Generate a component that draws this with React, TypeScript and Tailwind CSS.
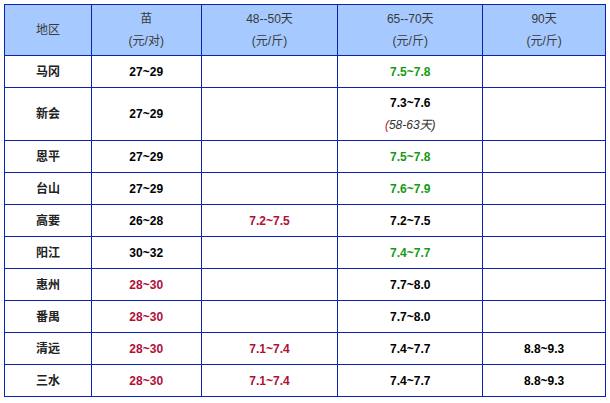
import React from "react";

type Cell = { t?: string; c?: "g" | "r" | "k" };
const G = "text-[#159a15]";
const R = "text-[#b0103a]";
const K = "text-black";

const rows: { name: string; h: string; cells: Cell[] }[] = [
  { name: "马冈", h: "h-[32px]", cells: [{ t: "27~29", c: "k" }, {}, { t: "7.5~7.8", c: "g" }, {}] },
  { name: "新会", h: "h-[53px]", cells: [{ t: "27~29", c: "k" }, {}, { t: "special" }, {}] },
  { name: "恩平", h: "h-[32px]", cells: [{ t: "27~29", c: "k" }, {}, { t: "7.5~7.8", c: "g" }, {}] },
  { name: "台山", h: "h-[32px]", cells: [{ t: "27~29", c: "k" }, {}, { t: "7.6~7.9", c: "g" }, {}] },
  { name: "高要", h: "h-[32px]", cells: [{ t: "26~28", c: "k" }, { t: "7.2~7.5", c: "r" }, { t: "7.2~7.5", c: "k" }, {}] },
  { name: "阳江", h: "h-[32px]", cells: [{ t: "30~32", c: "k" }, {}, { t: "7.4~7.7", c: "g" }, {}] },
  { name: "惠州", h: "h-[32px]", cells: [{ t: "28~30", c: "r" }, {}, { t: "7.7~8.0", c: "k" }, {}] },
  { name: "番禺", h: "h-[32px]", cells: [{ t: "28~30", c: "r" }, {}, { t: "7.7~8.0", c: "k" }, {}] },
  { name: "清远", h: "h-[32px]", cells: [{ t: "28~30", c: "r" }, { t: "7.1~7.4", c: "r" }, { t: "7.4~7.7", c: "k" }, { t: "8.8~9.3", c: "k" }] },
  { name: "三水", h: "h-[32px]", cells: [{ t: "28~30", c: "r" }, { t: "7.1~7.4", c: "r" }, { t: "7.4~7.7", c: "k" }, { t: "8.8~9.3", c: "k" }] },
];

const colorOf = (c?: string) => (c === "g" ? G : c === "r" ? R : K);

export default function App() {
  const td = "border border-[#0a22b0] p-0 text-center align-middle";
  return (
    <div className="bg-white w-[610px] h-[403px] p-1" style={{ fontFamily: '"Liberation Sans", Arial, "Noto Sans CJK SC", sans-serif' }}>
      <table className="border-collapse table-fixed text-[12px] leading-[22px]">
        <colgroup>
          <col className="w-[87px]" />
          <col className="w-[110px]" />
          <col className="w-[137px]" />
          <col className="w-[145px]" />
          <col className="w-[123px]" />
        </colgroup>
        <thead>
          <tr className="h-[51px] bg-[#a6c9ff] text-[#3a3a3a]">
            <th className={`${td} font-normal`}>地区</th>
            <th className={`${td} font-normal`}>
              <div>苗</div>
              <div>(元/对)</div>
            </th>
            <th className={`${td} font-normal`}>
              <div>48--50天</div>
              <div>(元/斤)</div>
            </th>
            <th className={`${td} font-normal`}>
              <div>65--70天</div>
              <div>(元/斤)</div>
            </th>
            <th className={`${td} font-normal`}>
              <div>90天</div>
              <div>(元/斤)</div>
            </th>
          </tr>
        </thead>
        <tbody className="font-bold">
          {rows.map((r) => (
            <tr key={r.name} className={r.h}>
              <td className={`${td} text-[#222]`}>{r.name}</td>
              {r.cells.map((c, i) => (
                <td key={i} className={`${td} ${colorOf(c.c)}`}>
                  {c.t === "special" ? (
                    <>
                      <div className="text-black">7.3~7.6</div>
                      <div className="italic font-normal text-[#333]">
                        <span className={R}>(</span>58-63天)
                      </div>
                    </>
                  ) : (
                    c.t ?? ""
                  )}
                </td>
              ))}
            </tr>
          ))}
        </tbody>
      </table>
    </div>
  );
}
